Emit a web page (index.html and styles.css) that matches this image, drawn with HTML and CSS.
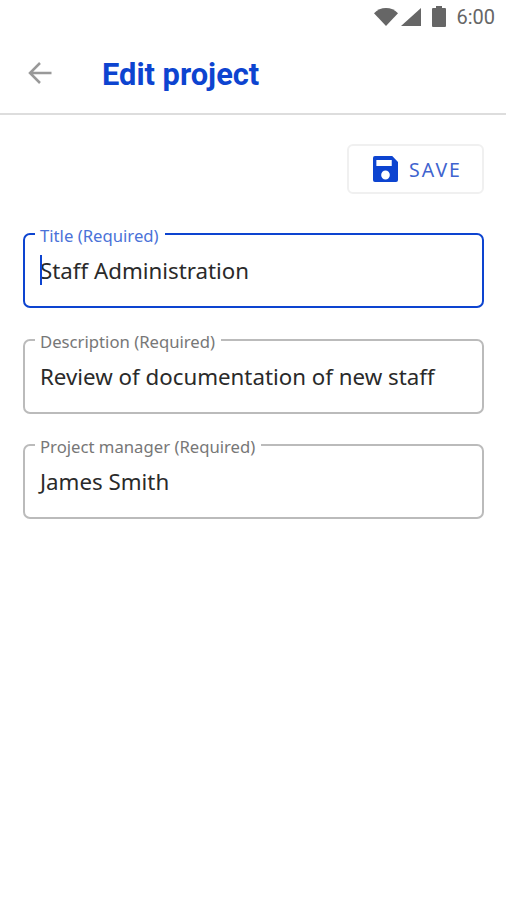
FILE: index.html
```html
<!DOCTYPE html>
<html>
<head>
    <title>Edit project</title>
    <link rel="stylesheet" href="styles.css">
</head>
<body>
    <div class="status-bar">
        <svg class="wifi" width="24" height="19" viewBox="0 0 26 20" preserveAspectRatio="none"><path d="M0 6.500C3.500 3 8 1 13 1s9.500 2 13 5.500L13 20z"/></svg>
        <svg class="signal" width="20" height="18" viewBox="0 0 19 19" preserveAspectRatio="none"><path d="M19 0v19H0z"/></svg>
        <svg class="battery" width="14" height="21" viewBox="0 0 14 20" preserveAspectRatio="none"><path d="M4 0h6v2h3a1 1 0 0 1 1 1v16a1 1 0 0 1-1 1H1a1 1 0 0 1-1-1V3a1 1 0 0 1 1-1h3z"/></svg>
        <span class="clock">6:00</span>
    </div>

    <div class="app-bar">
        <svg class="back" width="26" height="24" viewBox="0 0 26 24"><path d="M24.500 12H3M13 2 3 12l10 10"/></svg>
        <h1>Edit project</h1>
    </div>

    <div class="actions">
        <button class="save">
            <svg width="25" height="26" viewBox="0 0 26 26" preserveAspectRatio="none"><path fill-rule="evenodd" d="M2 0h18l6 6v18a2 2 0 0 1-2 2H2a2 2 0 0 1-2-2V2a2 2 0 0 1 2-2zM3.500 4v6h16V4zM13 14.500a4.500 4.500 0 1 0 0 9 4.500 4.500 0 0 0 0-9z"/></svg>
            SAVE
        </button>
    </div>

    <form class="fields">
        <fieldset class="field focused">
            <legend>Title (Required)</legend>
            <div class="value"><span class="caret"></span>Staff Administration</div>
        </fieldset>
        <fieldset class="field">
            <legend>Description (Required)</legend>
            <div class="value">Review of documentation of new staff</div>
        </fieldset>
        <fieldset class="field">
            <legend>Project manager (Required)</legend>
            <div class="value">James Smith</div>
        </fieldset>
    </form>
</body>
</html>
```

FILE: styles.css
```css
body { margin: 0; background-color: #fff; font-family: "Noto Sans", Arial, sans-serif; }
.status-bar { display: flex; justify-content: flex-end; align-items: center; height: 33px; padding-right: 11px; color: #666; }
.status-bar svg { fill: #666; }
.wifi { margin-right: 3px; }
.signal { margin-right: 11px; }
.battery { margin-right: 10px; }
.clock { font-family: Roboto, Arial, sans-serif; font-size: 20px; }
.app-bar { display: flex; align-items: center; height: 80px; border-bottom: 2px solid #ddd; }
.back { margin-left: 27px; fill: none; stroke: #999; stroke-width: 2.500; }
h1 { margin: 2px 0 0 49px; color: #0d44d0; font-family: Roboto, Arial, sans-serif; font-size: 30.800px; font-weight: 700; }
.actions { display: flex; justify-content: flex-end; padding: 29px 22px 0 0; }
.save { display: flex; align-items: center; gap: 11px; width: 137px; height: 50px; padding: 0 0 0 24px; border: 2px solid #f0f0f0; border-radius: 6px; background: #fff; color: #3f64cf; font-family: "Noto Sans", Arial, sans-serif; font-size: 19.500px; letter-spacing: 2px; }
.save svg { fill: #0d44d0; }
.fields { display: flex; flex-direction: column; gap: 18.500px; padding: 27px 22px 0 23px; }
.field { height: 87px; margin: 0; padding: 0 15px; box-sizing: border-box; border: 2px solid #bbb; border-radius: 7px; }
.field legend { padding: 4px 6px 0 5px; margin-left: -5px; color: #777; font-size: 16.700px; line-height: 22px; }
.value { position: relative; margin-top: 7px; color: #2a2a2a; font-size: 22.300px; line-height: 34px; white-space: nowrap; }
.focused { border-color: #0d44d0; }
.focused legend { color: #4a72d8; }
.caret { position: absolute; left: 0; top: 1px; width: 2px; height: 30px; background-color: #0d44d0; }
```
